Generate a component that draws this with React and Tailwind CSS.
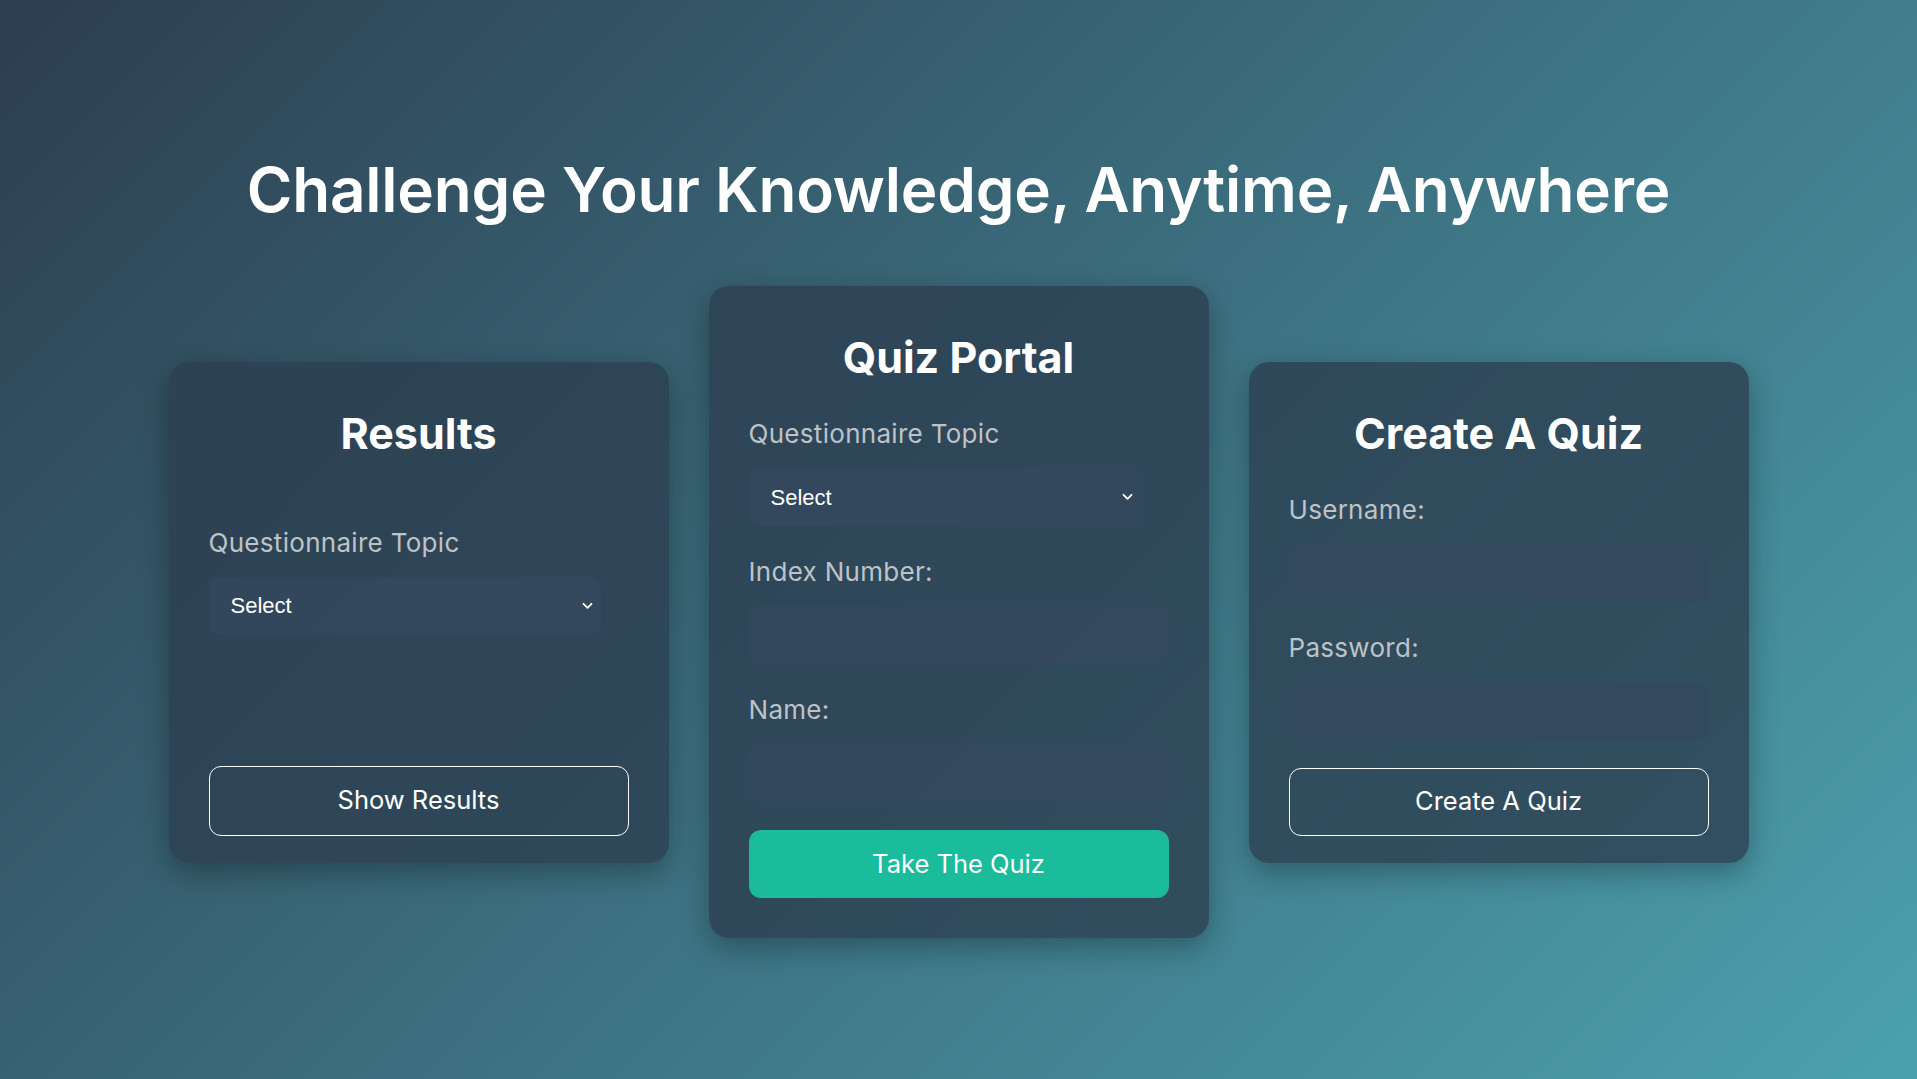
import { useState } from "react";

const topics = ["Select", "General Knowledge", "Science", "History"];

function SelectBox({ value, onChange }) {
    return (
        <div className="relative w-[392px] h-[58px]">
            <select
                value={value}
                onChange={(e) => onChange(e.target.value)}
                className="appearance-none w-full h-full rounded-[10px] bg-[#34495e]/80 pl-[22px] pr-10 text-white text-[22px] outline-none font-['Liberation_Sans',Arial,sans-serif]"
            >
                {topics.map((t) => (
                    <option key={t} value={t} className="bg-[#2c3e50]">{t}</option>
                ))}
            </select>
            <svg className="absolute right-[8px] top-1/2 -translate-y-1/2 pointer-events-none" width="11" height="8" viewBox="0 0 11 8" fill="none">
                <path d="M1.5 1.8 L5.5 5.8 L9.5 1.8" stroke="white" strokeWidth="1.8" strokeLinecap="round" strokeLinejoin="round" />
            </svg>
        </div>
    );
}

function Field({ label, type = "text" }) {
    return (
        <div className="flex flex-col mb-7">
            <label className="h-9 leading-9 text-[26px] tracking-[0.3px] text-[#bdc3c7] mb-4">{label}</label>
            <input type={type} className="w-full h-[58px] rounded-[10px] bg-[#34495e]/80 px-5 text-white text-xl outline-none" />
        </div>
    );
}

export default function App() {
    const [resultTopic, setResultTopic] = useState("Select");
    const [quizTopic, setQuizTopic] = useState("Select");

    return (
        <div className="w-full h-screen bg-[linear-gradient(135deg,#2c3e50,#4ca1af)] flex flex-col items-center font-['Inter','Noto_Sans',sans-serif] overflow-hidden">
            <h1 className="mt-[158px] h-16 leading-16 text-[62px] font-semibold text-white tracking-[-0.2px]">
                Challenge Your Knowledge, Anytime, Anywhere
            </h1>

            <div className="mt-16 flex items-center gap-10">
                {/* results */}
                <div className="w-[500px] h-[501px] flex flex-col px-10 pt-10 pb-[27px] rounded-[20px] bg-[#2c3e50]/80 shadow-[0_10px_30px_rgba(0,0,0,0.3)]">
                    <h2 className="h-[62px] leading-[62px] text-center text-[43px] font-bold text-white mb-[61px]">Results</h2>
                    <label className="h-9 leading-9 text-[26px] tracking-[0.3px] text-[#bdc3c7] mb-4">Questionnaire Topic</label>
                    <SelectBox value={resultTopic} onChange={setResultTopic} />
                    <button className="mt-auto w-full h-[70px] rounded-xl border border-white text-white text-[25.5px] cursor-pointer hover:bg-white/10 transition-all">
                        Show Results
                    </button>
                </div>

                {/* quiz portal */}
                <div className="w-[500px] flex flex-col p-10 rounded-[20px] bg-[#2c3e50]/80 shadow-[0_10px_30px_rgba(0,0,0,0.3)]">
                    <h2 className="h-[62px] leading-[62px] text-center text-[43px] font-bold text-white mb-7">Quiz Portal</h2>
                    <div className="flex flex-col mb-7">
                        <label className="h-9 leading-9 text-[26px] tracking-[0.3px] text-[#bdc3c7] mb-4">Questionnaire Topic</label>
                        <SelectBox value={quizTopic} onChange={setQuizTopic} />
                    </div>
                    <Field label="Index Number:" />
                    <Field label="Name:" />
                    <button className="w-full h-[68px] rounded-xl bg-[#1abc9c] text-white text-[25.5px] cursor-pointer hover:bg-[#16a085] transition-all">
                        Take The Quiz
                    </button>
                </div>

                {/* create */}
                <div className="w-[500px] h-[501px] flex flex-col px-10 pt-10 pb-[27px] rounded-[20px] bg-[#2c3e50]/80 shadow-[0_10px_30px_rgba(0,0,0,0.3)]">
                    <h2 className="h-[62px] leading-[62px] text-center text-[43px] font-bold text-white mb-7">Create A Quiz</h2>
                    <Field label="Username:" />
                    <Field label="Password:" type="password" />
                    <button className="mt-auto w-full h-[70px] rounded-xl border border-white text-white text-[25.5px] cursor-pointer hover:bg-white/10 transition-all">
                        Create A Quiz
                    </button>
                </div>
            </div>
        </div>
    );
}
